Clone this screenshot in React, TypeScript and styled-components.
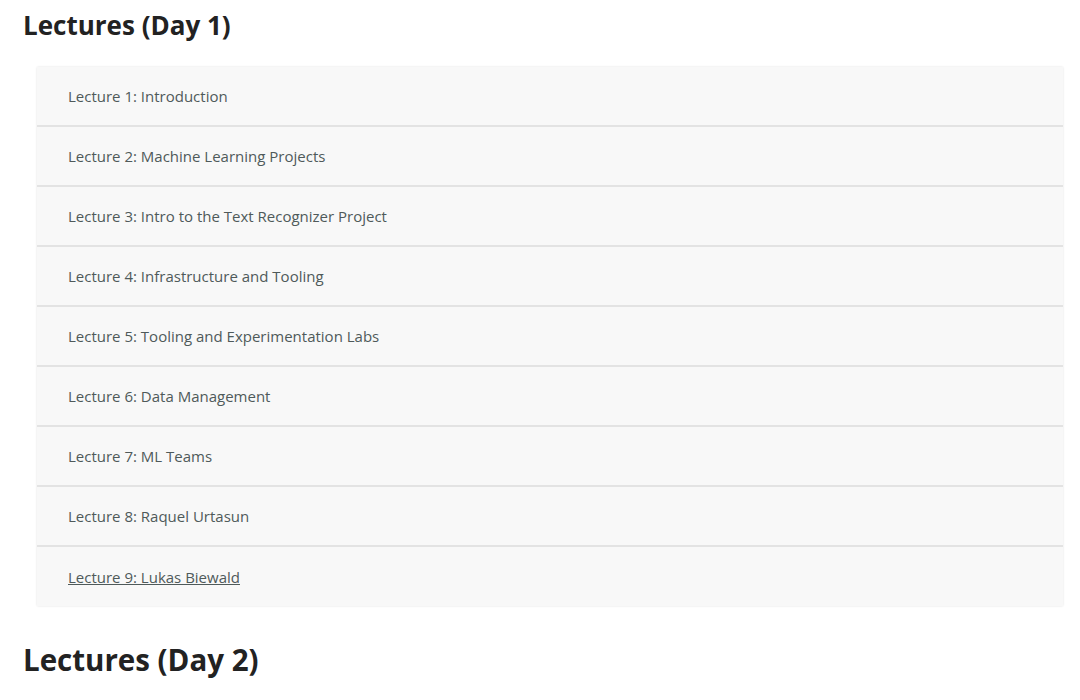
import React from "react";
import styled, { createGlobalStyle } from "styled-components";

const Global = createGlobalStyle`
  html, body { margin: 0; padding: 0; background: #ffffff; }
  body { font-family: "Open Sans", "Noto Sans", sans-serif; }
`;

const Page = styled.div`
  padding: 6px 17px 0 23px;
`;

const Heading = styled.h2<{ $size?: number }>`
  margin: 0;
  font-size: ${(p) => p.$size ?? 26}px;
  line-height: 38px;
  font-weight: 700;
  color: #222;
`;

const Card = styled.div`
  margin: 23px 0 0 14px;
  background: #f8f8f8;
  box-shadow: 0 0 2px rgba(0, 0, 0, 0.12);
  display: flex;
  flex-direction: column;
`;

const Row = styled.div`
  height: 58px;
  border-bottom: 2px solid #e3e3e3;
  display: flex;
  align-items: center;
  padding-left: 31px;
  &:last-child { border-bottom: none; height: 59px; }
`;

const Item = styled.a<{ $link?: boolean }>`
  font-size: 15px;
  color: #4f5a5a;
  text-decoration: ${(p) => (p.$link ? "underline" : "none")};
`;

const Second = styled(Heading)`
  margin-top: 35px;
`;

const lectures = [
  "Lecture 1: Introduction",
  "Lecture 2: Machine Learning Projects",
  "Lecture 3: Intro to the Text Recognizer Project",
  "Lecture 4: Infrastructure and Tooling",
  "Lecture 5: Tooling and Experimentation Labs",
  "Lecture 6: Data Management",
  "Lecture 7: ML Teams",
  "Lecture 8: Raquel Urtasun",
  "Lecture 9: Lukas Biewald",
];

export default function App() {
  return (
    <Page>
      <Global />
      <Heading>Lectures (Day 1)</Heading>
      <Card>
        {lectures.map((l, i) => (
          <Row key={l}>
            <Item $link={i === lectures.length - 1}>{l}</Item>
          </Row>
        ))}
      </Card>
      <Second $size={29.5}>Lectures (Day 2)</Second>
    </Page>
  );
}
